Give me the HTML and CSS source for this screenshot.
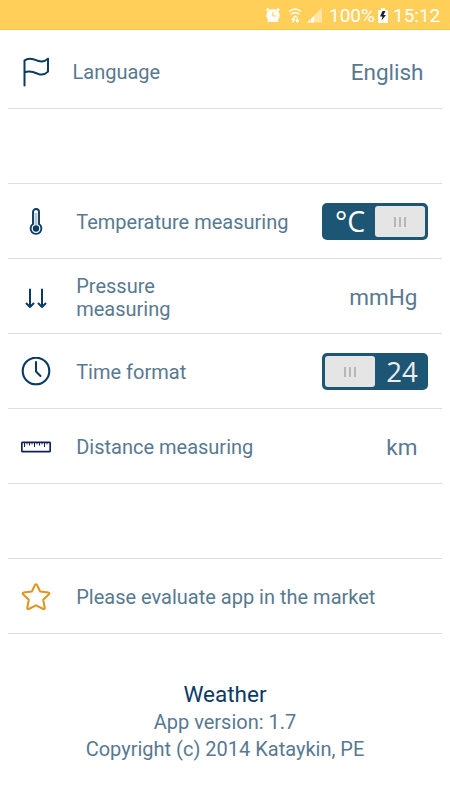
FILE: index.html
```html
<!DOCTYPE html>
<html lang="en">
<head>
<meta charset="utf-8">
<title>Weather</title>
<link rel="stylesheet" href="styles.css">
</head>
<body>
<header class="status">
  <svg class="status-icons" viewBox="0 0 60 20" width="60" height="20">
    <g fill="none" stroke="#fff">
      <circle cx="8" cy="10.500" r="6.600" fill="#fff" stroke="none"/>
      <path d="M1.500 5.500 4 3.500M14.500 5.500 12 3.500M3 17l2-2.500M13 17l-2-2.500" stroke-width="2"/>
      <path d="M8 7v4h3" stroke="#ffcf5a" stroke-width="1.200"/>
      <path d="M24 6.500q6-5 12 0M26 9.300q4.200-3.700 8.400 0" stroke-width="1.300"/>
      <path d="M28.300 17.500v-4M32.300 12.500v4" stroke-width="1.500"/>
    </g>
    <path d="M28 11.300q2.200-1.800 4.400 0L30.200 13zM26 15l2.300-3 2.300 3zM30 15h4.600l-2.300 3z" fill="#fff"/>
    <path d="M42 17.500 57 3v14.500z" fill="#ffe6a6"/>
    <path d="M42 17.500l3-2.500v2.500zM46 14l3-3v6.500h-3z" fill="#fff"/>
  </svg>
  <span class="percent">100%</span>
  <svg class="battery" viewBox="0 0 10 15" width="10" height="15">
    <path d="M0 2h3V0h4v2h3v13H0z" fill="#fff"/>
    <path d="M4.500 3 2 8.500h2.500L3.500 12.500 8 7H5.500L7.500 3z" fill="#222"/>
  </svg>
  <span class="time">15:12</span>
</header>
<main class="settings">
  <section class="row row-language">
    <svg class="icon" viewBox="0 0 30 30" fill="none" stroke="#0b3a63" stroke-width="2" stroke-linecap="round" stroke-linejoin="round">
      <path d="M3.500 28.500V3.500C8-.5 14 2.500 17 3.800c3 1.200 7 .7 10-2.200v13c-3 3-7 3.500-10 2.200s-9-4-13.500-1.200"/>
    </svg>
    <span class="label">Language</span>
    <span class="value">English</span>
  </section>
  <div class="row gap"></div>
  <section class="row">
    <svg class="icon" viewBox="0 0 30 30" fill="none">
      <path d="M15 6v12" stroke="#bcc5cd" stroke-width="3"/>
      <path d="M12 17V5a3 3 0 0 1 6 0V17a5.400 5.400 0 1 1-6 0z" stroke="#0b3a63" stroke-width="1.900"/>
      <circle cx="15" cy="21.500" r="3.200" fill="#0b3a63"/>
    </svg>
    <span class="label">Temperature measuring</span>
    <div class="switch"><span class="switch-text celsius">°C</span><span class="knob"><i></i><i></i><i></i></span></div>
  </section>
  <section class="row">
    <svg class="icon" viewBox="0 0 30 30" fill="none" stroke="#0b3a63" stroke-width="2" stroke-linecap="round" stroke-linejoin="round">
      <path d="M9 7.500V25M5.500 21.500 9 25l3.500-3.500M21 7.500V25M17.500 21.500 21 25l3.500-3.500"/>
    </svg>
    <span class="label narrow">Pressure measuring</span>
    <span class="value unit">mmHg</span>
  </section>
  <section class="row">
    <svg class="icon" viewBox="0 0 30 30" fill="none" stroke="#0b3a63" stroke-width="2.100" stroke-linecap="round" stroke-linejoin="round">
      <circle cx="15" cy="14" r="13.300"/><path d="M15 5v9.500l4.500 4.500"/>
    </svg>
    <span class="label">Time format</span>
    <div class="switch"><span class="knob"><i></i><i></i><i></i></span><span class="switch-text">24</span></div>
  </section>
  <section class="row">
    <svg class="icon" viewBox="0 0 30 30" fill="none" stroke="#10205a">
      <rect x=".8" y="10.300" width="28.400" height="9.400" rx="1" stroke-width="1.700"/>
      <path d="M3.500 10v5M8.500 10v3.500M13.500 10v5M18.500 10v3.500M23.500 10v5"/>
      <path d="M6 10v2.500M11 10v2.500M16 10v2.500M21 10v2.500M26 10v2.500" stroke-width=".8"/>
    </svg>
    <span class="label">Distance measuring</span>
    <span class="value unit">km</span>
  </section>
  <div class="row gap"></div>
  <section class="row">
    <svg class="icon" viewBox="0 0 30 30" fill="none" stroke="#e0951c" stroke-width="2" stroke-linejoin="round">
      <path d="M14 3Q15 1.500 16 3l3.200 6.500 8.300 1.100q1.500.5.500 1.700l-5.800 5.500 1.600 8.200q0 1.400-1.400 1L15 23.300l-7.400 3.700q-1.400.4-1.400-1l1.600-8.200L2 12.300q-1-1.200.5-1.700l8.300-1.100z"/>
    </svg>
    <span class="label">Please evaluate app in the market</span>
  </section>
</main>
<footer class="about">
  <h1>Weather</h1>
  <p>App version: 1.7</p>
  <p>Copyright (c) 2014 Kataykin, PE</p>
</footer>
</body>
</html>
```
FILE: styles.css
```css
* { box-sizing: border-box; }
body {
  margin: 0;
  height: 800px;
  background: #fff;
  color: #587990;
  font-family: Roboto, sans-serif;
  font-size: 20px;
  overflow: hidden;
}
.status {
  height: 30px;
  background: #ffcf5a;
  border-bottom: 1px solid #fbc647;
  color: #fff;
  display: flex;
  align-items: center;
  padding: 2px 10px 0 265px;
  white-space: nowrap;
}
.status-icons { flex: none; margin-top: -1px; }
.percent { width: 46px; margin-left: 4px; font-size: 19px; }
.battery { flex: none; margin: 0 5px 0 3px; }
.time { font-size: 19px; }
.settings { padding: 4px 8px 0; }
.row {
  height: 75px;
  border-bottom: 1px solid #dedede;
  display: flex;
  align-items: center;
  padding: 2px 14px 0 13px;
}
.icon { width: 30px; height: 30px; flex: none; }
.label { margin-left: 25.2px; line-height: 23px; white-space: nowrap; }
.row-language .label { margin-left: 21.5px; }
.row-language { padding-right: 18.5px; }
.narrow { width: 120px; padding-top: 1px; white-space: normal; }
.value { margin-left: auto; font-size: 22.5px; line-height: 28px; }
.unit { margin-right: 10.5px; }
.switch {
  width: 106px;
  height: 37px;
  margin: -1px 0 0 auto;
  padding: 3px;
  border-radius: 5px;
  background: #1c5674;
  display: flex;
}
.knob {
  width: 50px;
  height: 31px;
  border-radius: 3px;
  background: #e5e5e5;
  display: flex;
  align-items: center;
  justify-content: center;
  gap: 3px;
}
.knob i { width: 2px; height: 10px; background: #b7b7b7; }
.switch-text {
  flex: 1;
  padding-left: 4px;
  text-align: center;
  font: 27.5px/31px "Open Sans", sans-serif;
  color: #eee;
}
.celsius { padding-left: 0; font-size: 28.5px; line-height: 30px; color: #fff; }
.about { padding-top: 46px; text-align: center; line-height: 27px; }
.about h1 { margin: 0 0 1px; font-size: 22.5px; font-weight: 400; line-height: 28px; color: #0b3a63; }
.about p { margin: 0; }
```
